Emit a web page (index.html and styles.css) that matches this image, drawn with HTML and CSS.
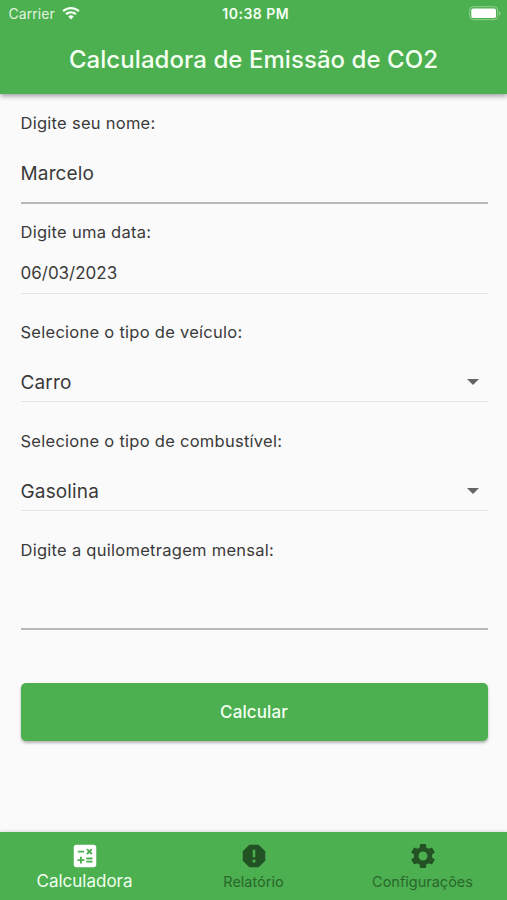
FILE: index.html
```html
<!DOCTYPE html>
<html lang="pt-BR">
<head>
<meta charset="utf-8">
<title>Calculadora de Emissão de CO2</title>
<link rel="stylesheet" href="styles.css">
</head>
<body>
<div class="app">
  <header class="app-bar">
    <div class="status">
      <div class="status-left"><span class="carrier">Carrier</span>
        <svg class="wifi" viewBox="0 0 18 13"><path d="M9 0C5.600 0 2.500 1.300.300 3.500l1.500 1.600C3.700 3.300 6.200 2.200 9 2.200s5.300 1.100 7.200 2.900l1.500-1.600C15.500 1.300 12.400 0 9 0zM9 4.200c-2.200 0-4.200.9-5.700 2.300l1.600 1.600C6 7.100 7.400 6.400 9 6.400s3 .7 4.100 1.700l1.600-1.600C13.200 5.100 11.200 4.200 9 4.200zM9 8.300c-1.100 0-2.100.4-2.800 1.100L9 12.500l2.800-3.100C11.100 8.700 10.100 8.300 9 8.300z"/></svg>
      </div>
      <span class="clock">10:38 PM</span>
      <svg class="battery" viewBox="0 0 32 15"><rect class="shell" x=".7" y=".7" width="28" height="13" rx="3.500"/><rect x="2.300" y="2.500" width="24.700" height="9.500" rx="1.800"/><path class="tip" d="M30 5.200c1 .3 1.500 1.100 1.500 2.100S31 9.100 30 9.400z"/></svg>
    </div>
    <h1 class="title"><span>Calculadora de Emissão de CO2</span></h1>
  </header>
  <main class="form">
    <div class="field name">
      <div class="label">Digite seu nome:</div>
      <div class="value">Marcelo</div>
    </div>
    <div class="field date">
      <div class="label">Digite uma data:</div>
      <div class="value">06/03/2023</div>
    </div>
    <div class="field select">
      <div class="label">Selecione o tipo de veículo:</div>
      <div class="value">Carro<svg class="caret" viewBox="0 0 12 6"><path d="M0 0h12L6 6z"/></svg></div>
    </div>
    <div class="field select">
      <div class="label">Selecione o tipo de combustível:</div>
      <div class="value">Gasolina<svg class="caret" viewBox="0 0 12 6"><path d="M0 0h12L6 6z"/></svg></div>
    </div>
    <div class="field km">
      <div class="label">Digite a quilometragem mensal:</div>
      <div class="value"></div>
    </div>
    <button class="submit">Calcular</button>
  </main>
  <nav class="tabs">
    <div class="tab active">
      <svg class="icon" viewBox="0 0 24 24"><path d="M19 3H5c-1.100 0-2 .9-2 2v14c0 1.100.9 2 2 2h14c1.100 0 2-.9 2-2V5c0-1.100-.9-2-2-2zm-5.970 4.060L14.090 6l1.410 1.410L16.910 6l1.060 1.060-1.410 1.410 1.410 1.410-1.060 1.060-1.410-1.400-1.410 1.410-1.060-1.060 1.410-1.410-1.410-1.420zm-6.780.66h5v1.500h-5v-1.500zM11.500 16h-2v2H8v-2H6v-1.500h2v-2h1.500v2h2V16zm6.500 1.250h-5v-1.500h5v1.500zm0-2.500h-5v-1.500h5v1.500z"/></svg>
      <span>Calculadora</span>
    </div>
    <div class="tab">
      <svg class="icon" viewBox="0 0 24 24"><path d="M15.730 3H8.270L3 8.270v7.460L8.270 21h7.460L21 15.730V8.270L15.730 3zM12 17.300c-.72 0-1.300-.58-1.300-1.300 0-.72.58-1.300 1.300-1.300.72 0 1.300.58 1.300 1.300 0 .72-.58 1.300-1.300 1.300zm1-4.300h-2V7h2v6z"/></svg>
      <span>Relatório</span>
    </div>
    <div class="tab">
      <svg class="icon" viewBox="0 0 24 24"><path d="M19.140 12.940c.04-.3.06-.61.06-.94 0-.32-.02-.64-.07-.94l2.030-1.580c.18-.14.23-.41.12-.61l-1.920-3.320c-.12-.22-.37-.29-.59-.22l-2.390.96c-.5-.38-1.030-.7-1.620-.94l-.36-2.540c-.04-.24-.24-.41-.48-.41h-3.840c-.24 0-.43.17-.47.41l-.36 2.540c-.59.24-1.130.57-1.620.94l-2.390-.96c-.22-.08-.47 0-.59.22L2.740 8.870c-.12.21-.08.47.12.61l2.030 1.580c-.05.3-.09.63-.09.94s.02.64.07.94l-2.030 1.580c-.18.14-.23.41-.12.61l1.920 3.320c.12.22.37.29.59.22l2.390-.96c.5.38 1.030.7 1.620.94l.36 2.540c.05.24.24.41.48.41h3.840c.24 0 .44-.17.47-.41l.36-2.540c.59-.24 1.130-.56 1.620-.94l2.390.96c.22.08.47 0 .59-.22l1.920-3.320c.12-.22.07-.47-.12-.61l-2.010-1.580zM12 15.600c-1.980 0-3.600-1.620-3.600-3.600s1.620-3.600 3.600-3.600 3.600 1.620 3.600 3.600-1.620 3.600-3.600 3.600z"/></svg>
      <span>Configurações</span>
    </div>
  </nav>
</div>
</body>
</html>
```
FILE: styles.css
```css
* { box-sizing: border-box; }
body { margin: 0; background: #fafafa; font-family: Inter, "Liberation Sans", sans-serif; color: #3a3a3a; }
.app { width: 507px; height: 900px; display: flex; flex-direction: column; overflow: hidden; }
.app-bar { height: 94px; flex: none; background: #4caf50; color: #f4fff2; box-shadow: 0 2px 5px rgba(0,0,0,.38); }
.status { height: 27px; padding: 0 6px 0 8.500px; display: grid; grid-template-columns: 1fr auto 1fr; align-items: center; }
.status-left { display: flex; align-items: center; gap: 7px; }
.carrier { font-size: 14px; letter-spacing: .05px; color: #e0f5dd; }
.wifi { width: 18px; height: 13px; fill: #f4fff2; }
.clock { font-size: 14px; font-weight: 600; letter-spacing: .5px; padding-left: 2px; }
.battery { width: 32px; height: 15px; justify-self: end; fill: #fff; }
.battery .shell { fill: none; stroke: #93d08f; stroke-width: 1; }
.battery .tip { fill: #93d08f; }
.title { margin: 0; height: 65px; display: flex; align-items: center; justify-content: center; font-size: 24px; font-weight: 500; letter-spacing: .06px; white-space: nowrap; }
.form { flex: 1; padding: 14px 19.500px 0 20.500px; display: flex; flex-direction: column; }
.field { flex: none; display: flex; flex-direction: column; border-bottom: 1px solid #e4e4e4; }
.label { height: 30px; line-height: 30px; font-size: 16.500px; letter-spacing: .27px; white-space: nowrap; }
.value { flex: 1; display: flex; align-items: center; justify-content: space-between; font-size: 19px; letter-spacing: .15px; }
.name { height: 96px; border-bottom: 2px solid #b9b9b9; }
.name .value { padding-top: 7px; }
.date { height: 77px; margin-top: 13px; }
.date .value { font-size: 17px; letter-spacing: 0; padding-top: 5px; }
.select { height: 85px; margin-top: 23px; }
.select + .select { height: 85px; margin-top: 24px; }
.select .value { padding-top: 16px; padding-right: 9px; }
.caret { width: 12px; height: 6px; fill: #646464; }
.km { height: 95px; margin-top: 24px; border-bottom: 2px solid #b9b9b9; }
.submit { flex: none; height: 58.500px; margin-top: 52.500px; border: 0; border-radius: 5px; background: #4caf50; color: #f4fff2; font: 500 17px Inter, sans-serif; letter-spacing: .1px; box-shadow: 0 2px 3px rgba(0,0,0,.28); }
.tabs { height: 68.500px; flex: none; display: grid; grid-template-columns: repeat(3, 1fr); background: #4caf50; box-shadow: 0 -1px 3px rgba(0,0,0,.12); }
.tab { display: flex; flex-direction: column; align-items: center; padding-top: 9px; font-size: 14.500px; color: #2a682c; }
.tab span { height: 22px; line-height: 22px; }
.icon { width: 30px; height: 30px; fill: #235225; flex: none; }
.active { font-size: 17px; color: #f0ffee; }
.active span { line-height: 20px; }
.active .icon { fill: #fff; }
```
